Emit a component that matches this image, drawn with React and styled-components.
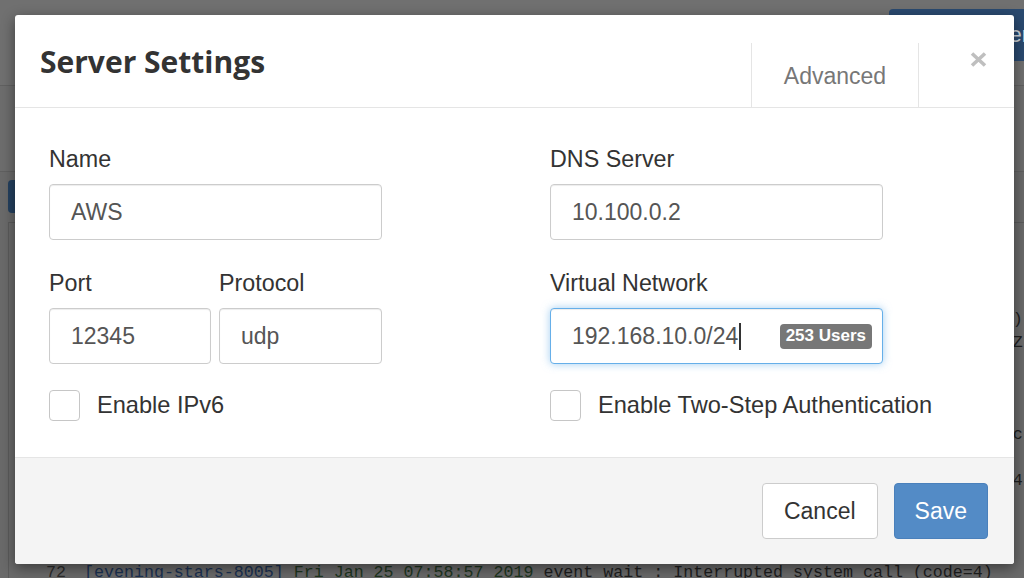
import React from "react";
import styled, { createGlobalStyle } from "styled-components";

const GlobalStyle = createGlobalStyle`
  html, body {
    margin: 0;
    padding: 0;
  }
  body {
    background: #6c6c6c;
    font-family: "Liberation Sans", Arial, sans-serif;
    overflow: hidden;
  }
  * {
    box-sizing: border-box;
  }
`;

/* ---------- dimmed page behind the dialog ---------- */

const Page = styled.div`
  position: relative;
  width: 1024px;
  height: 578px;
  overflow: hidden;
  background: #6a6a6a;
`;

const PageHeader = styled.div`
  height: 86px;
  background: #707070;
  border-bottom: 1px solid #616161;
  display: flex;
  justify-content: flex-end;
  align-items: flex-start;
  padding-top: 9px;
`;

const HeaderButton = styled.div`
  height: 52px;
  margin-right: -33px;
  padding: 0 28px 0 25px;
  display: flex;
  align-items: center;
  white-space: nowrap;
  background: #2a4a70;
  color: #cdd3da;
  font-size: 22px;
  border-radius: 4px;
`;

const Toolbar = styled.div`
  height: 86px;
  background: #6d6d6d;
  border-bottom: 1px solid #606060;
`;

const ActionRow = styled.div`
  height: 50px;
  padding: 8px 0 0 8px;
`;

const ToolButton = styled.div`
  width: 90px;
  height: 33px;
  background: #24405f;
  border-radius: 4px;
`;

const LogPane = styled.div`
  margin-left: 8px;
  padding-top: 16px;
  border-left: 1px solid #5b5b5b;
  border-top: 1px solid #5b5b5b;
  font-family: "Liberation Mono", "Courier New", monospace;
  font-size: 16.65px;
  line-height: 23px;
  color: #1e1e1e;
  white-space: pre;
`;

const LogLine = styled.div`
  display: flex;
  height: 23px;
`;

const LineNo = styled.span`
  width: 40px;
  margin-left: 17px;
  margin-right: 18px;
  text-align: right;
  color: #2c2c2c;
`;

const Tag = styled.span`
  color: #1b3152;
`;

const Stamp = styled.span`
  color: #1e361f;
`;

/* ---------- dialog ---------- */

const Modal = styled.div`
  position: absolute;
  top: 15px;
  left: 15px;
  width: 999px;
  background: #fff;
  border-radius: 3px;
  overflow: hidden;
  box-shadow: 0 4px 14px rgba(0, 0, 0, 0.45);
`;

const ModalHeader = styled.div`
  height: 93px;
  display: flex;
  border-bottom: 1px solid #e5e5e5;
`;

const Title = styled.h2`
  flex: 1;
  align-self: center;
  margin: 2px 0 0 25px;
  font-family: "Open Sans", "Noto Sans", sans-serif;
  font-weight: 700;
  font-size: 30px;
  line-height: 1;
  color: #333;
`;

const Tab = styled.div`
  align-self: flex-end;
  width: 167px;
  height: 64px;
  display: flex;
  align-items: center;
  justify-content: center;
  padding-top: 3px;
  border-left: 1px solid #e5e5e5;
  font-size: 23px;
  color: #777;
`;

const CloseArea = styled.div`
  align-self: flex-end;
  width: 96px;
  height: 64px;
  border-left: 1px solid #e5e5e5;
  display: flex;
  justify-content: flex-end;
  align-items: flex-start;
  padding: 9px 27px 0 0;
`;

const ModalBody = styled.div`
  padding: 38px 34px 36px;
`;

const FormRow = styled.div`
  display: grid;
  grid-template-columns: 333px 333px;
  column-gap: 168px;
  margin-bottom: ${(p) => p.$space || 0}px;
`;

const SplitCell = styled.div`
  display: grid;
  grid-template-columns: 162px 163px;
  column-gap: 8px;
`;

const Label = styled.label`
  display: block;
  margin-bottom: 12px;
  font-size: 23.3px;
  line-height: 26px;
  color: #333;
`;

const Input = styled.input`
  display: block;
  width: 100%;
  height: 56px;
  padding: 0 21px;
  border: 1px solid #ccc;
  border-radius: 4px;
  background: #fff;
  font-family: "Liberation Sans", Arial, sans-serif;
  font-size: 23px;
  color: #555;
  box-shadow: inset 0 1px 1px rgba(0, 0, 0, 0.075);
  outline: none;
`;

const FieldBox = styled.div`
  display: flex;
  align-items: center;
  height: 56px;
  padding: 0 10px 0 21px;
  border: 1px solid ${(p) => (p.$focused ? "#66afe9" : "#ccc")};
  border-radius: 4px;
  background: #fff;
  font-size: 23px;
  color: #555;
  box-shadow: ${(p) =>
    p.$focused
      ? "inset 0 1px 1px rgba(0,0,0,.075), 0 0 8px rgba(102,175,233,.6)"
      : "inset 0 1px 1px rgba(0,0,0,.075)"};
`;

const Caret = styled.span`
  display: inline-block;
  width: 2px;
  height: 27px;
  margin-left: 1px;
  background: #333;
`;

const Badge = styled.span`
  margin-left: auto;
  height: 25px;
  padding: 0 6px;
  display: flex;
  align-items: center;
  background: #777;
  color: #fff;
  border-radius: 4px;
  font-size: 17px;
  font-weight: 700;
`;

const Check = styled.label`
  display: flex;
  align-items: center;
  white-space: nowrap;
  font-size: 23.6px;
  color: #333;
`;

const CheckBox = styled.span`
  flex: none;
  width: 31px;
  height: 31px;
  margin-right: 17px;
  border: 1px solid #c6c6c6;
  border-radius: 4px;
  background: #fff;
`;

const ModalFooter = styled.div`
  display: flex;
  justify-content: flex-end;
  gap: 16px;
  padding: 25px 26px;
  background: #f4f4f4;
  border-top: 1px solid #e5e5e5;
`;

const Button = styled.button`
  height: 56px;
  padding: 0 ${(p) => (p.$primary ? 20 : 21)}px;
  border-radius: 4px;
  font-family: "Liberation Sans", Arial, sans-serif;
  font-size: 23px;
  border: 1px solid ${(p) => (p.$primary ? "#4a80bb" : "#ccc")};
  background: ${(p) => (p.$primary ? "#538bc6" : "#fff")};
  color: ${(p) => (p.$primary ? "#fff" : "#333")};
`;

const logLines = [
  [58, "07:58:29", " OpenVPN 2.4.6 x86_64-pc-linux-gnu [SSL] [LZO]"],
  [59, "07:58:29", " TUN/TAP device tun0 opened"],
  [60, "07:58:30", " /sbin/ip link set dev tun0 up mtu 1500"],
  [61, "07:58:31", " Incoming Data Channel: Cipher 'AES-256-GCM' (ok)"],
  [62, "07:58:31", " Peer session established at 2019-01-25T07:58:31Z"],
  [63, "07:58:32", " /sbin/ip addr add dev tun0 192.168.10.1/24"],
  [64, "07:58:32", " UDPv4 link local (bound): [AF_INET]:12345"],
  [65, "07:58:33", " MULTI: multi_init called, r=256 v=256"],
  [66, "07:58:33", " Initialization Sequence Completed (tun0 is up, c"],
  [67, "07:58:37", " MANAGEMENT: >STATE:1548403137,CONNECTED"],
  [68, "07:58:47", " UDP event wait : Interrupted system call (code=4"],
  [69, "07:58:52", " SIGUSR1[soft,ping-restart] received"],
  [70, "07:58:52", " Restart pause, 5 second(s)"],
  [71, "07:58:57", " TCP/UDP: Preserving recently used address"],
  [72, "07:58:57", " event wait : Interrupted system call (code=4)"],
];

function CloseIcon() {
  return (
    <svg width="17" height="15" viewBox="0 0 17 15">
      <path
        d="M2 1.5 L15 13.5 M15 1.5 L2 13.5"
        stroke="#bfbfbf"
        strokeWidth="3.6"
        strokeLinecap="butt"
      />
    </svg>
  );
}

export default function App() {
  return (
    <Page>
      <GlobalStyle />

      <PageHeader>
        <HeaderButton>New Server</HeaderButton>
      </PageHeader>
      <Toolbar />
      <ActionRow>
        <ToolButton />
      </ActionRow>
      <LogPane>
        {logLines.map(([no, time, msg]) => (
          <LogLine key={no}>
            <LineNo>{no}</LineNo>
            <Tag>[evening-stars-8005]</Tag>
            <Stamp> Fri Jan 25 {time} 2019</Stamp>
            <span>{msg}</span>
          </LogLine>
        ))}
      </LogPane>

      <Modal>
        <ModalHeader>
          <Title>Server Settings</Title>
          <Tab>Advanced</Tab>
          <CloseArea>
            <CloseIcon />
          </CloseArea>
        </ModalHeader>

        <ModalBody>
          <FormRow $space={30}>
            <div>
              <Label>Name</Label>
              <Input readOnly defaultValue="AWS" />
            </div>
            <div>
              <Label>DNS Server</Label>
              <Input readOnly defaultValue="10.100.0.2" />
            </div>
          </FormRow>

          <FormRow $space={26}>
            <SplitCell>
              <div>
                <Label>Port</Label>
                <Input readOnly defaultValue="12345" />
              </div>
              <div>
                <Label>Protocol</Label>
                <Input readOnly defaultValue="udp" />
              </div>
            </SplitCell>
            <div>
              <Label>Virtual Network</Label>
              <FieldBox $focused>
                <span>192.168.10.0/24</span>
                <Caret />
                <Badge>253 Users</Badge>
              </FieldBox>
            </div>
          </FormRow>

          <FormRow>
            <Check>
              <CheckBox />
              Enable IPv6
            </Check>
            <Check>
              <CheckBox />
              Enable Two-Step Authentication
            </Check>
          </FormRow>
        </ModalBody>

        <ModalFooter>
          <Button>Cancel</Button>
          <Button $primary>Save</Button>
        </ModalFooter>
      </Modal>
    </Page>
  );
}
